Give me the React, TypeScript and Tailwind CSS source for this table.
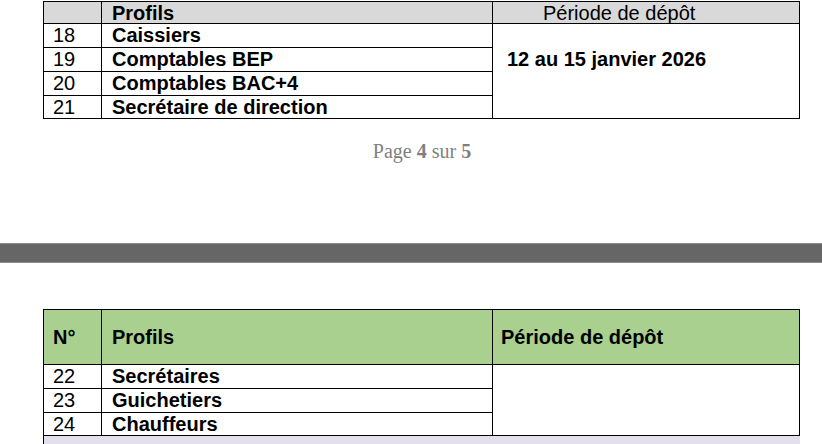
import React from "react";

const font = { fontFamily: '"Liberation Sans", Arial, sans-serif' };

export default function App() {
  const top = [
    ["18", "Caissiers"],
    ["19", "Comptables BEP"],
    ["20", "Comptables BAC+4"],
    ["21", "Secrétaire de direction"],
  ];
  const bottom = [
    ["22", "Secrétaires"],
    ["23", "Guichetiers"],
    ["24", "Chauffeurs"],
  ];
  return (
    <div className="w-[822px] h-[444px] overflow-hidden bg-white text-black" style={font}>
      {/* top table */}
      <div className="pl-[43px] pt-[1px]">
        <div className="w-[757px] border border-black">
          <div className="flex h-[22px] bg-[#d9d9d9] border-b border-black">
            <div className="w-[58px] border-r border-black" />
            <div className="w-[391px] border-r border-black pl-[10px] text-[20px] leading-[22px] font-bold">Profils</div>
            <div className="flex-1 pl-[50px] text-[20px] leading-[22px]">Période de dépôt</div>
          </div>
          <div className="flex">
            <div className="w-[449px] border-r border-black">
              {top.map(([n, p], i) => (
                <div key={n} className={`flex ${i < 3 ? "h-[24px] border-b border-black" : "h-[22px]"}`}>
                  <div className="w-[58px] border-r border-black pl-[9px] text-[20px] leading-[23px]">{n}</div>
                  <div className="flex-1 pl-[10px] text-[20px] leading-[23px] font-bold">{p}</div>
                </div>
              ))}
            </div>
            <div className="flex-1 pl-[14px] pt-[24px] text-[20px] leading-[23px] font-bold">12 au 15 janvier 2026</div>
          </div>
        </div>
      </div>

      {/* page footer */}
      <div className="h-[124px] pt-[21px] pl-[22px] text-center text-[20px] leading-[22px] text-[#7f7f7f]" style={{ fontFamily: '"Liberation Serif", "Times New Roman", serif' }}>
        Page <b>4</b> sur <b>5</b>
      </div>

      {/* page separator band */}
      <div className="h-[20px] bg-[#666666] border-t border-b border-[#8c8c8c]" />

      {/* bottom table */}
      <div className="pl-[43px] pt-[46px]">
        <div className="w-[757px] border-t border-l border-r border-black">
          <div className="flex h-[55px] bg-[#a9d08e] border-b border-black items-center text-[20px] font-bold">
            <div className="w-[58px] h-full border-r border-black pl-[9px] flex items-center">N°</div>
            <div className="w-[391px] h-full border-r border-black pl-[10px] flex items-center">Profils</div>
            <div className="flex-1 pl-[8px]">Période de dépôt</div>
          </div>
          <div className="flex">
            <div className="w-[449px] border-r border-black">
              {bottom.map(([n, p], i) => (
                <div key={n} className={`flex ${i < 2 ? "h-[24px] border-b border-black" : "h-[22px]"}`}>
                  <div className="w-[58px] border-r border-black pl-[9px] text-[20px] leading-[23px]">{n}</div>
                  <div className="flex-1 pl-[10px] text-[20px] leading-[23px] font-bold">{p}</div>
                </div>
              ))}
            </div>
            <div className="flex-1" />
          </div>
        </div>
        <div className="w-[757px] h-[20px] bg-[#e4dfec] border-t border-l border-black" />
      </div>
    </div>
  );
}
